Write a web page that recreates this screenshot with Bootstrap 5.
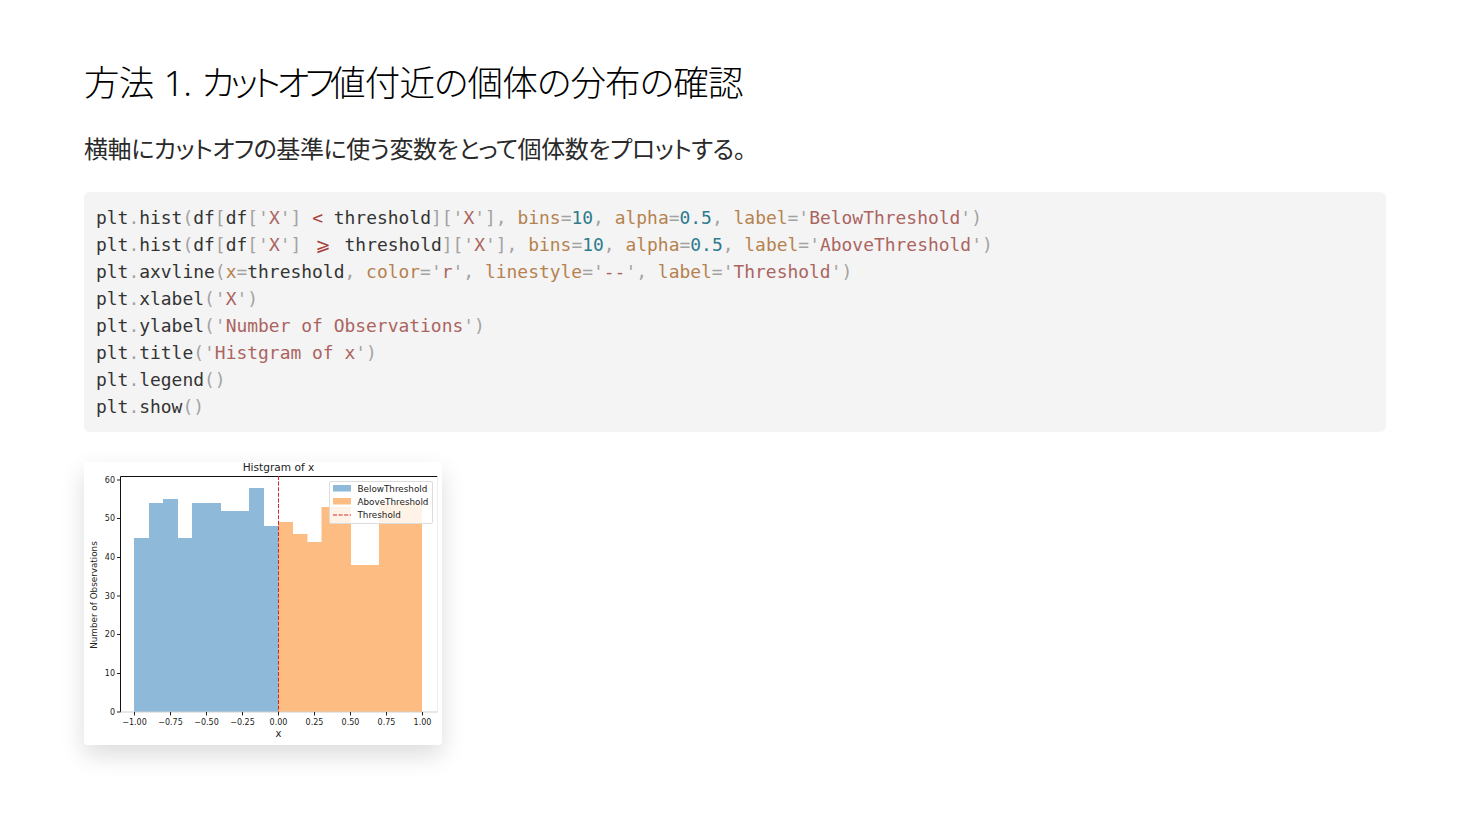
<!DOCTYPE html>
<html lang="ja">
<head>
<meta charset="utf-8">
<title>方法 1</title>
<link href="https://cdn.jsdelivr.net/npm/bootstrap@5.3.0/dist/css/bootstrap.min.css" rel="stylesheet">
<style>
body { background:#fff; color:#111; font-family:"Noto Sans","Noto Sans CJK JP",sans-serif; }
.slide-wrap { padding:59px 84px 60px; }
.slide-title { font-family:"Noto Sans","Noto Sans CJK JP",sans-serif; font-size:35.5px; font-weight:300; line-height:46px; margin:0 0 26px; letter-spacing:-.8px; word-spacing:2px; font-feature-settings:"palt"; color:#000; }
.kana-tight { letter-spacing:-4.4px; }
.slide-lead { font-size:24px; font-weight:400; line-height:36px; margin:0 0 25px; letter-spacing:-.4px; font-feature-settings:"palt"; color:#2a2a2a; }
.code-box { background:#f4f4f4; border-radius:6px; padding:12px; margin:0 0 30px; font-family:"DejaVu Sans Mono","Liberation Mono",monospace; font-size:17.94px; line-height:27px; color:#333; overflow:hidden; }
.code-box code { font:inherit; color:inherit; }
.tp { color:#a3a3a3; }
.ta { color:#b5824f; }
.ts { color:#ab6460; }
.tn { color:#2d7b8d; }
.to { color:#a8403c; }
.lig { display:inline-block; width:21.6px; text-align:center; font-family:"DejaVu Sans",sans-serif; }
.plot-card { width:358px; height:283px; background:#fff; border-radius:3px; box-shadow:0 10px 24px rgba(0,0,0,.14); }
.plot-card svg { display:block; }
.plot-card text { font-family:"DejaVu Sans",sans-serif; fill:#222; font-size:8px; }
.plot-card .ttl { font-size:10.6px; }
.plot-card .axl { font-size:8.8px; }
.plot-card .axx { font-size:10px; }
.plot-card .lgd { font-size:8.8px; }
</style>
</head>
<body>
<main class="slide-wrap">
<h1 class="slide-title">方法 1. <span class="kana-tight">カットオフ</span>値付近の個体の分布の確認</h1>
<p class="slide-lead">横軸にカットオフの基準に使う変数をとって個体数をプロットする。</p>
<pre class="code-box"><code>plt<span class="tp">.</span>hist<span class="tp">(</span>df<span class="tp">[</span>df<span class="tp">[</span><span class="ts"><span class="tp">'</span>X<span class="tp">'</span></span><span class="tp">]</span> <span class="to">&lt;</span> threshold<span class="tp">]</span><span class="tp">[</span><span class="ts"><span class="tp">'</span>X<span class="tp">'</span></span><span class="tp">],</span> <span class="ta">bins</span><span class="tp">=</span><span class="tn">10</span><span class="tp">,</span> <span class="ta">alpha</span><span class="tp">=</span><span class="tn">0.5</span><span class="tp">,</span> <span class="ta">label</span><span class="tp">=</span><span class="ts"><span class="tp">'</span>BelowThreshold<span class="tp">'</span></span><span class="tp">)</span>
plt<span class="tp">.</span>hist<span class="tp">(</span>df<span class="tp">[</span>df<span class="tp">[</span><span class="ts"><span class="tp">'</span>X<span class="tp">'</span></span><span class="tp">]</span> <span class="to lig">⩾</span> threshold<span class="tp">]</span><span class="tp">[</span><span class="ts"><span class="tp">'</span>X<span class="tp">'</span></span><span class="tp">],</span> <span class="ta">bins</span><span class="tp">=</span><span class="tn">10</span><span class="tp">,</span> <span class="ta">alpha</span><span class="tp">=</span><span class="tn">0.5</span><span class="tp">,</span> <span class="ta">label</span><span class="tp">=</span><span class="ts"><span class="tp">'</span>AboveThreshold<span class="tp">'</span></span><span class="tp">)</span>
plt<span class="tp">.</span>axvline<span class="tp">(</span><span class="ta">x</span><span class="tp">=</span>threshold<span class="tp">,</span> <span class="ta">color</span><span class="tp">=</span><span class="ts"><span class="tp">'</span>r<span class="tp">'</span></span><span class="tp">,</span> <span class="ta">linestyle</span><span class="tp">=</span><span class="ts"><span class="tp">'</span>--<span class="tp">'</span></span><span class="tp">,</span> <span class="ta">label</span><span class="tp">=</span><span class="ts"><span class="tp">'</span>Threshold<span class="tp">'</span></span><span class="tp">)</span>
plt<span class="tp">.</span>xlabel<span class="tp">(</span><span class="ts"><span class="tp">'</span>X<span class="tp">'</span></span><span class="tp">)</span>
plt<span class="tp">.</span>ylabel<span class="tp">(</span><span class="ts"><span class="tp">'</span>Number of Observations<span class="tp">'</span></span><span class="tp">)</span>
plt<span class="tp">.</span>title<span class="tp">(</span><span class="ts"><span class="tp">'</span>Histgram of x<span class="tp">'</span></span><span class="tp">)</span>
plt<span class="tp">.</span>legend<span class="tp">()</span>
plt<span class="tp">.</span>show<span class="tp">()</span></code></pre>
<div class="plot-card">
<svg width="358" height="283" viewBox="84 462 358 283" xmlns="http://www.w3.org/2000/svg" role="img" aria-label="Histgram of x">
  <g fill="#8fb9d9">
    <rect x="134" y="538" width="15" height="174"/>
    <rect x="149" y="503" width="14.4" height="209"/>
    <rect x="163" y="499" width="15" height="213"/>
    <rect x="178" y="538" width="14.4" height="174"/>
    <rect x="192" y="503" width="29" height="209"/>
    <rect x="221" y="511" width="28.4" height="201"/>
    <rect x="249" y="488" width="15" height="224"/>
    <rect x="264" y="526" width="14.4" height="186"/>
  </g>
  <g fill="#fdbc82">
    <rect x="278" y="522" width="15" height="190"/>
    <rect x="293" y="534" width="14.4" height="178"/>
    <rect x="307" y="542" width="15" height="170"/>
    <rect x="321.5" y="507" width="29.5" height="205"/>
    <rect x="351" y="565" width="28.4" height="147"/>
    <rect x="379" y="503" width="43" height="209"/>
  </g>
  <path d="M120.5 712V476.500H437.500" fill="none" stroke="#111" stroke-width="1"/>
  <path d="M437.500 476.500V712" fill="none" stroke="#eee" stroke-width="1"/>
  <path d="M120.500 712H437.500" fill="none" stroke="#cfcfcf" stroke-width="1"/>
  <path d="M278.500 476V712" fill="none" stroke="#d62728" stroke-width="1" stroke-dasharray="4 1.6"/>
  <g stroke="#222" stroke-width="1">
    <path d="M117 712h3.500M117 673.500h3.500M117 634.500h3.500M117 596h3.500M117 557.500h3.500M117 518.500h3.500M117 480h3.500"/>
    <path d="M134.500 712v3.500M170.500 712v3.500M206.500 712v3.500M242.500 712v3.500M278.500 712v3.500M314.500 712v3.500M350.500 712v3.500M386.500 712v3.500M422.500 712v3.500"/>
  </g>
  <g text-anchor="end">
    <text x="115" y="714.500">0</text>
    <text x="115" y="676">10</text>
    <text x="115" y="637">20</text>
    <text x="115" y="598.500">30</text>
    <text x="115" y="560">40</text>
    <text x="115" y="521">50</text>
    <text x="115" y="482.500">60</text>
  </g>
  <g text-anchor="middle">
    <text x="134.500" y="724.500">−1.00</text>
    <text x="170.500" y="724.500">−0.75</text>
    <text x="206.500" y="724.500">−0.50</text>
    <text x="242.500" y="724.500">−0.25</text>
    <text x="278.500" y="724.500">0.00</text>
    <text x="314.500" y="724.500">0.25</text>
    <text x="350.500" y="724.500">0.50</text>
    <text x="386.500" y="724.500">0.75</text>
    <text x="422.500" y="724.500">1.00</text>
    <text class="axx" x="278.500" y="736.500">x</text>
    <text class="ttl" x="278.500" y="471">Histgram of x</text>
    <text class="axl" transform="translate(97 595) rotate(-90)">Number of Observations</text>
  </g>
  <rect x="329.500" y="481.500" width="103" height="42" rx="1.500" fill="#fff" fill-opacity=".8" stroke="#dcdcdc"/>
  <rect x="333" y="485" width="18" height="6.500" fill="#8fb9d9"/>
  <rect x="333" y="498" width="18" height="6.500" fill="#fdbc82"/>
  <path d="M333 515h18" stroke="#d62728" stroke-width="1" stroke-dasharray="4 1.600"/>
  <text class="lgd" x="357.500" y="492">BelowThreshold</text>
  <text class="lgd" x="357.500" y="505">AboveThreshold</text>
  <text class="lgd" x="357.500" y="518">Threshold</text>
</svg>
</div>
</main>
<script src="https://cdn.jsdelivr.net/npm/bootstrap@5.3.0/dist/js/bootstrap.bundle.min.js"></script>
</body>
</html>
